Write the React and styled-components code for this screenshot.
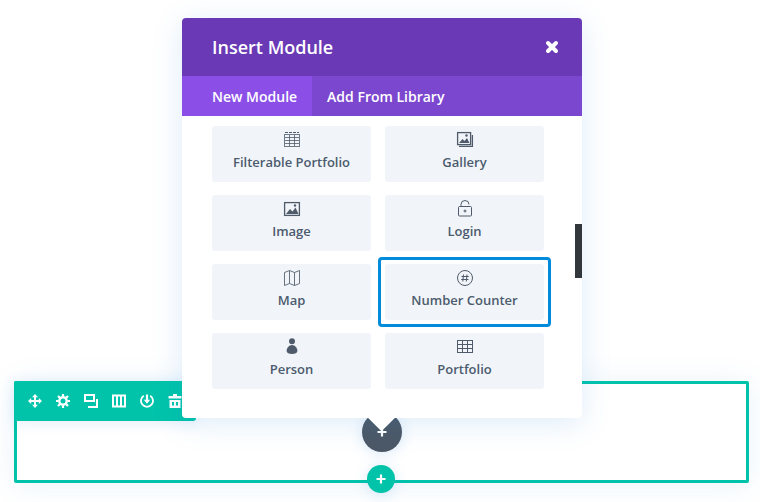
import React from 'react';
import styled, { createGlobalStyle } from 'styled-components';

const GlobalStyle = createGlobalStyle`
  html, body {
    margin: 0;
    padding: 0;
    background: #fff;
    font-family: "Open Sans", "Liberation Sans", sans-serif;
  }
`;

const Page = styled.div`
  position: relative;
  width: 760px;
  height: 502px;
  padding: 381px 11px 0 14px;
  box-sizing: border-box;
  overflow: hidden;
`;

const Section = styled.div`
  position: relative;
  height: 102px;
  box-sizing: border-box;
  border: 3px solid #00c3aa;
  border-radius: 2px;
  box-shadow: 0 2px 30px rgba(43, 135, 218, 0.1);
`;

const Toolbar = styled.div`
  display: flex;
  align-items: center;
  gap: 14px;
  width: 182px;
  height: 40px;
  margin: -3px 0 0 -3px;
  padding-left: 14px;
  box-sizing: border-box;
  background: #00c3aa;
  border-radius: 2px 0 3px 0;
  color: #fff;
  box-shadow: 0 2px 14px rgba(43, 135, 218, 0.14);
`;

const ToolIcon = styled.svg`
  display: block;
  flex: none;
  width: 14px;
  height: 14px;
`;

const RoundButton = styled.div`
  position: absolute;
  display: flex;
  align-items: center;
  justify-content: center;
  border-radius: 50%;
  color: #fff;
  left: ${p => p.$left}px;
  top: ${p => p.$top}px;
  width: ${p => p.$size}px;
  height: ${p => p.$size}px;
  background: ${p => p.$color};
  box-shadow: 0 2px 14px rgba(43, 135, 218, 0.18);
`;

const Modal = styled.div`
  position: absolute;
  left: 182px;
  top: 18px;
  width: 400px;
  height: 400px;
  background: #fff;
  border-radius: 4px;
  box-shadow: 0 5px 30px rgba(43, 135, 218, 0.16);
  display: flex;
  flex-direction: column;

  &::after {
    content: '';
    position: absolute;
    left: 189px;
    bottom: -9px;
    width: 21px;
    height: 21px;
    background: #fff;
    transform: rotate(45deg);
  }
`;

const Header = styled.div`
  display: flex;
  align-items: center;
  justify-content: space-between;
  height: 58px;
  flex: none;
  padding: 0 23px 0 30px;
  background: #6a39b6;
  border-radius: 4px 4px 0 0;
  color: #fff;
`;

const Title = styled.div`
  font-size: 18px;
  font-weight: 600;
`;

const Tabs = styled.div`
  display: flex;
  height: 40px;
  flex: none;
  background: #7c47cf;
`;

const Tab = styled.div`
  display: flex;
  align-items: center;
  padding: 0 15px 0 ${p => (p.$active ? 30 : 15)}px;
  font-size: 14px;
  font-weight: 600;
  color: #fff;
  background: ${p => (p.$active ? '#8b4fe8' : 'transparent')};
`;

const Grid = styled.div`
  display: grid;
  grid-template-columns: 159px 159px;
  grid-auto-rows: 56px;
  column-gap: 14px;
  row-gap: 13px;
  padding: 10px 0 0 30px;
`;

const ModuleButton = styled.div`
  position: relative;
  display: flex;
  flex-direction: column;
  align-items: center;
  background: #f1f5f9;
  border-radius: 3px;
  color: #4c5b6e;
  padding-top: 6px;
  box-sizing: border-box;

  ${p => p.$focused && `
    &::before {
      content: '';
      position: absolute;
      inset: -7px;
      border: 3px solid #008bdb;
      border-radius: 4px;
    }
  `}
`;

const ModuleIcon = styled.svg`
  display: block;
  width: 16px;
  height: 16px;
  overflow: visible;
  color: #4f5b6a;
`;

const ModuleLabel = styled.div`
  margin-top: 5px;
  font-size: 13px;
  font-weight: 600;
  line-height: 18px;
`;

const Scrollbar = styled.div`
  position: absolute;
  left: 393px;
  top: 206px;
  width: 7px;
  height: 54px;
  background: #32373c;
`;

const Plus = ({ size }) => (
  <svg width={size} height={size} viewBox="0 0 10 10" aria-hidden="true">
    <path d="M5 .5v9M.5 5h9" stroke="currentColor" strokeWidth="2.2" fill="none" />
  </svg>
);

const CloseIcon = () => (
  <svg width="14" height="14" viewBox="0 0 14 14" aria-hidden="true">
    <path d="M3 3l8 8M11 3l-8 8" stroke="currentColor" strokeWidth="4" strokeLinecap="round" fill="none" />
  </svg>
);

const moduleIcons = {
  filterable: (
    <g fill="none" stroke="currentColor" strokeWidth="1">
      <rect x="0.5" y="2.5" width="15" height="12" opacity="0.8" />
      <path d="M1 0.5h14" strokeDasharray="3 1" />
      <path d="M1 5.5h14M1 8.5h14M1 11.5h14M5.5 3v11M10.5 3v11" opacity="0.8" />
    </g>
  ),
  gallery: (
    <g>
      <rect x="0.6" y="0.6" width="13" height="12" fill="none" stroke="currentColor" strokeWidth="1.3" />
      <path d="M15.4 3v11.4H2" fill="none" stroke="currentColor" strokeWidth="1.3" />
      <path d="M2 11l3.5-4 2 2 2.5-3 2.5 5z" fill="currentColor" />
      <circle cx="9.5" cy="3.5" r="1.2" fill="currentColor" />
    </g>
  ),
  image: (
    <g>
      <rect x="0.6" y="1.6" width="14.8" height="12.8" fill="none" stroke="currentColor" strokeWidth="1.3" />
      <path d="M2 13l4-5 2.5 2.5 3-4L14.5 13z" fill="currentColor" />
      <circle cx="11" cy="4.5" r="1.2" fill="currentColor" />
    </g>
  ),
  login: (
    <g fill="none" stroke="currentColor">
      <rect x="1.5" y="5.5" width="13" height="9.5" rx="1" />
      <path d="M4 5.5V3.5a4 4 0 0 1 8 0" />
      <circle cx="8" cy="10" r="1" />
    </g>
  ),
  map: (
    <path
      d="M0.5 2.5l5-2 5 2 5-2v13l-5 2-5-2-5 2zM5.5 1v12.5M10.5 2.5v13"
      fill="none"
      stroke="currentColor"
      opacity="0.85"
    />
  ),
  counter: (
    <g fill="none" stroke="currentColor">
      <circle cx="8" cy="8" r="7.5" />
      <path d="M6.5 4.5L5.8 11.5M10 4.5l-.7 7M4.5 6.5h7.3M4.2 9.5h7.3" />
    </g>
  ),
  person: (
    <g fill="currentColor">
      <circle cx="8" cy="2.2" r="3" />
      <path d="M8 6c3 0 5.4 3 5.4 6 0 2-2.4 3-5.4 3s-5.4-1-5.4-3c0-3 2.4-6 5.4-6z" />
    </g>
  ),
  portfolio: (
    <g fill="none" stroke="currentColor">
      <rect x="0.5" y="1.5" width="15" height="12" />
      <path d="M1 5.5h14M1 9.5h14M5.5 2v11M10.5 2v11" />
    </g>
  ),
};

const modules = [
  { key: 'filterable', label: 'Filterable Portfolio' },
  { key: 'gallery', label: 'Gallery' },
  { key: 'image', label: 'Image' },
  { key: 'login', label: 'Login' },
  { key: 'map', label: 'Map' },
  { key: 'counter', label: 'Number Counter', focused: true },
  { key: 'person', label: 'Person' },
  { key: 'portfolio', label: 'Portfolio' },
];

const toolIcons = [
  <g key="move" fill="currentColor">
    <path d="M6 2.5h2v9H6zM2.5 6h9v2h-9z" />
    <path d="M7 0l3 3.2H4zM7 14l3-3.2H4zM0 7l3.2-3v6zM14 7l-3.2-3v6z" />
  </g>,
  <g key="gear">
    <circle cx="7" cy="7" r="3.7" fill="none" stroke="currentColor" strokeWidth="2.4" />
    <path d="M7 0v2.5M7 11.5V14M0 7h2.5M11.5 7H14M2 2l1.8 1.8M10.2 10.2L12 12M12 2l-1.8 1.8M3.8 10.2L2 12" stroke="currentColor" strokeWidth="2.2" fill="none" />
  </g>,
  <g key="clone" fill="none" stroke="currentColor" strokeWidth="2">
    <rect x="1" y="1" width="9" height="6" />
    <path d="M13 5v8H4" />
  </g>,
  <g key="columns" fill="none" stroke="currentColor" strokeWidth="2">
    <rect x="1" y="1.5" width="12" height="11" />
    <path d="M5 2v10M9 2v10" />
  </g>,
  <g key="download" fill="none" stroke="currentColor" strokeWidth="1.8">
    <path d="M3.8 1.7a6 6 0 1 0 6.4 0" />
    <path d="M7 0.5v8" strokeWidth="2.2" />
    <path d="M3.8 5.8L7 9.8l3.2-4" fill="currentColor" stroke="none" />
  </g>,
  <path
    key="trash"
    d="M5 0h4v2h4.5v2.5H.5V2H5zM1.5 6h11v8h-11zM4 8v3.5h2V8zM8 8v3.5h2V8z"
    fill="currentColor"
    fillRule="evenodd"
  />,
];

export default function App() {
  return (
    <>
      <GlobalStyle />
      <Page>
        <Section>
          <Toolbar>
            {toolIcons.map((icon, index) => (
              <ToolIcon key={index} viewBox="0 0 14 14" aria-hidden="true">{icon}</ToolIcon>
            ))}
          </Toolbar>
          <RoundButton $left={345} $top={28} $size={40} $color="#4c5866">
            <Plus size={10} />
          </RoundButton>
          <RoundButton $left={350} $top={81} $size={28} $color="#00c3aa">
            <Plus size={10} />
          </RoundButton>
        </Section>
        <Modal>
          <Header>
            <Title>Insert Module</Title>
            <CloseIcon />
          </Header>
          <Tabs>
            <Tab $active>New Module</Tab>
            <Tab>Add From Library</Tab>
          </Tabs>
          <Grid>
            {modules.map(item => (
              <ModuleButton key={item.key} $focused={item.focused}>
                <ModuleIcon viewBox="0 0 16 16" aria-hidden="true">{moduleIcons[item.key]}</ModuleIcon>
                <ModuleLabel>{item.label}</ModuleLabel>
              </ModuleButton>
            ))}
          </Grid>
          <Scrollbar />
        </Modal>
      </Page>
    </>
  );
}
